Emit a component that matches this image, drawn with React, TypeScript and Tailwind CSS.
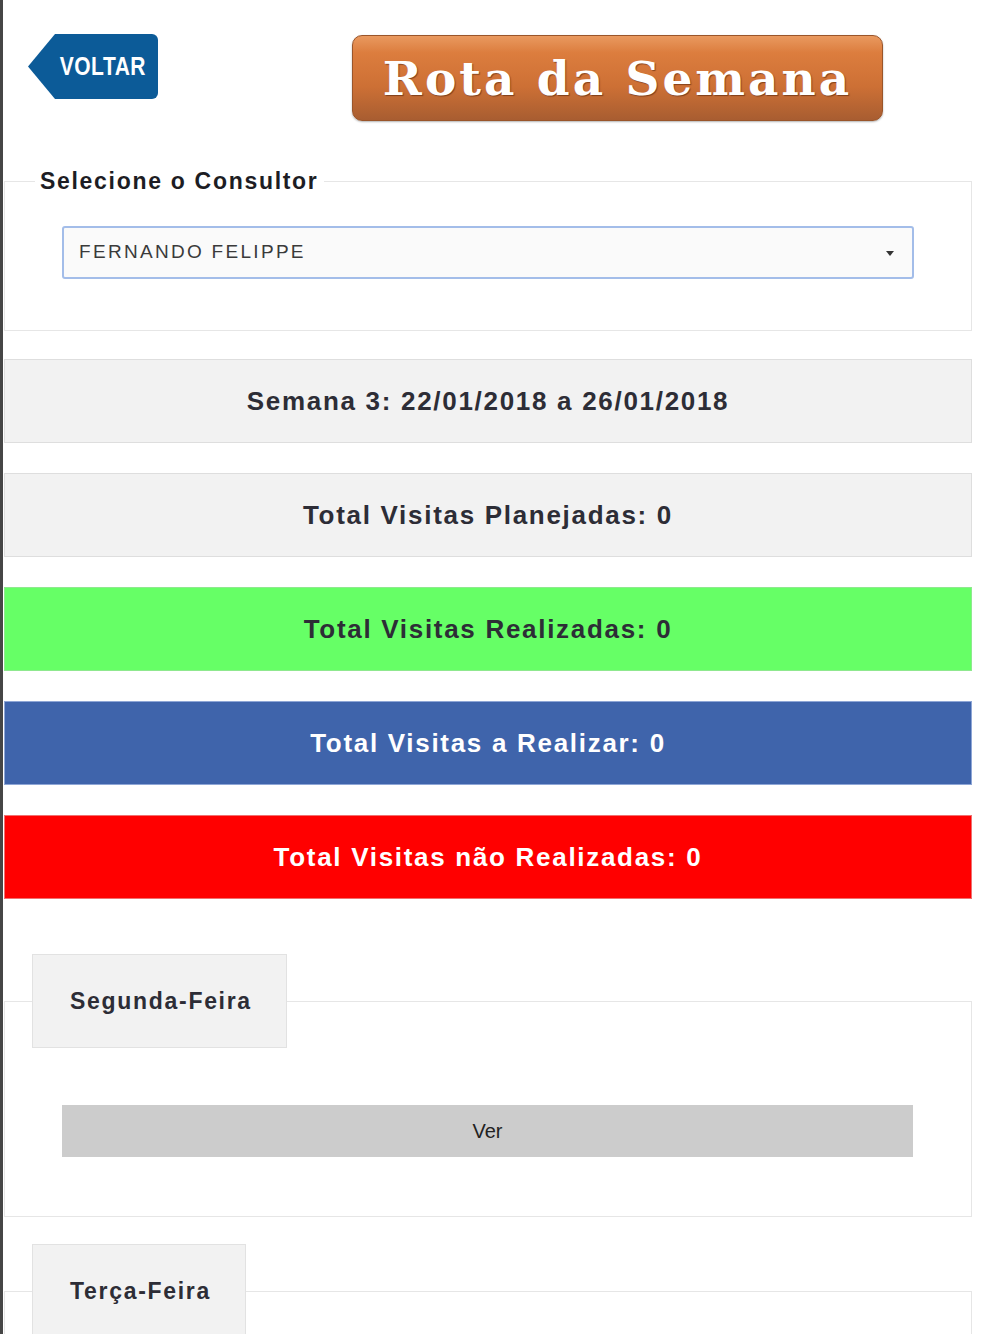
const bars = [
  { label: "Total Visitas Planejadas: 0", cls: "bg-[#f2f2f2] border-[#dedede] text-[#2d2d36]" },
  { label: "Total Visitas Realizadas: 0", cls: "bg-[#66ff66] border-[#8fe88f] text-[#2d2d36]" },
  { label: "Total Visitas a Realizar: 0", cls: "bg-[#3f64ab] border-[#8ea6d6] text-white" },
  { label: "Total Visitas não Realizadas: 0", cls: "bg-[#ff0000] border-[#f07070] text-white" },
];

function DayBlock({ day, showButton }: { day: string; showButton: boolean }) {
  return (
    <fieldset className="ml-px w-[968px] border border-[#e6e6e6] px-[27px] pb-[59px] m-0">
      <legend className="bg-[#f2f2f2] border border-[#e2e2e2] pl-[37px] pr-[34px] py-[32px] text-[23px] font-bold tracking-[1.7px] text-[#2d2d36] leading-[28px]">
        {day}
      </legend>
      {showButton && (
        <button className="mt-[57px] mx-[30px] w-[851px] h-[52px] bg-[#cccccc] text-[20px] text-[#222]">
          Ver
        </button>
      )}
    </fieldset>
  );
}

export default function App() {
  return (
    <div
      className="w-[1000px] h-[1334px] overflow-hidden bg-white border-l-[3px] border-[#464646]"
      style={{ fontFamily: '"Liberation Sans", Arial, sans-serif' }}
    >
      {/* Header */}
      <div className="flex items-start h-[168px]">
        <a className="mt-[34px] ml-[25px] w-[130px] h-[65px] bg-[#0c5b98] rounded-r-[6px] [clip-path:polygon(27px_0,100%_0,100%_100%,27px_100%,0_50%)] flex items-center justify-end pr-[12px]">
          <span className="text-white font-black text-[21px] tracking-[0.5px] [transform:scaleY(1.2)]">VOLTAR</span>
        </a>
        <div className="mt-[35px] ml-[194px] w-[531px] h-[86px] rounded-[10px] border border-[#9a552a] bg-[linear-gradient(to_bottom,#e9995f_0%,#dc7d3e_20%,#cd7035_60%,#a85d31_100%)] shadow-[0_1px_2px_rgba(0,0,0,0.3)] flex items-center justify-center">
          <span
            className="text-white font-bold text-[47px] leading-none tracking-[3px] [text-shadow:1px_1px_1px_rgba(60,20,0,0.5)]"
            style={{ fontFamily: '"DejaVu Serif", "Liberation Serif", serif' }}
          >
            Rota da Semana
          </span>
        </div>
      </div>

      {/* Consultor */}
      <fieldset className="ml-px w-[968px] border border-[#e6e6e6] px-[30px] pb-[51px] m-0">
        <legend className="px-[5px] text-[23px] font-bold tracking-[1.7px] text-[#1d1d24] leading-[26px]">
          Selecione o Consultor
        </legend>
        <div className="mt-[32px] mx-[27px] h-[53px] rounded-[3px] border-2 border-[#a3bde9] bg-[#fafafa] flex items-center justify-between pl-[15px] pr-[18px]">
          <span className="text-[19px] text-[#3a3a3a] tracking-[2.3px]">FERNANDO FELIPPE</span>
          <svg width="8" height="5" viewBox="0 0 8 5" className="mt-px">
            <path d="M0 0 L8 0 L4 5 Z" fill="#333" />
          </svg>
        </div>
      </fieldset>

      {/* Semana */}
      <div className="mt-[28px] ml-px w-[968px] h-[84px] bg-[#f2f2f2] border border-[#dedede] flex items-center justify-center text-[26px] font-bold tracking-[1.7px] text-[#2d2d36]">
        Semana 3: 22/01/2018 a 26/01/2018
      </div>

      {bars.map((b) => (
        <div
          key={b.label}
          className={`mt-[30px] ml-px w-[968px] h-[84px] border flex items-center justify-center text-[26px] font-bold tracking-[1.7px] ${b.cls}`}
        >
          {b.label}
        </div>
      ))}

      <div className="mt-[55px] flex flex-col gap-[27px]">
        <DayBlock day="Segunda-Feira" showButton />
        <DayBlock day="Terça-Feira" showButton={false} />
      </div>
    </div>
  );
}
